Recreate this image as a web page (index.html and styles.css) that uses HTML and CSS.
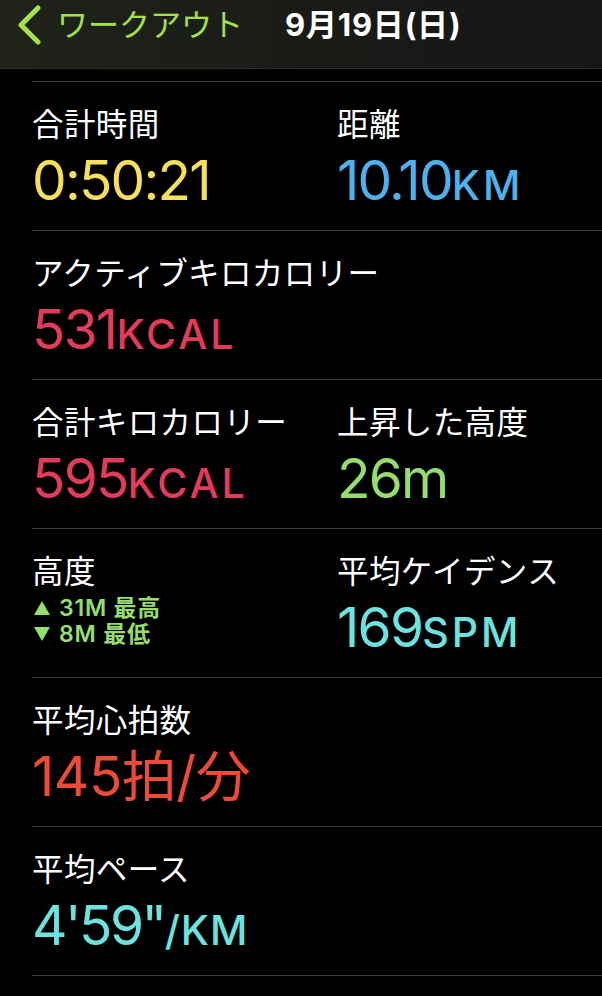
FILE: index.html
```html
<!DOCTYPE html>
<html lang="ja">
<head>
  <meta charset="UTF-8">
  <meta name="viewport" content="width=device-width, initial-scale=1.0">
  <title>ワークアウト</title>
  <link rel="stylesheet" href="styles.css">
</head>
<body>
  <div id="nav">
    <div class="back">
      <svg class="chevron" width="26" height="40" viewBox="0 0 26 40">
        <path d="M22 3 L5 20 L22 37" fill="none" stroke="#a6e04c" stroke-width="5" stroke-linecap="round" stroke-linejoin="round"/>
      </svg>
      <span>ワークアウト</span>
    </div>
    <div class="title">9月19日(日)</div>
  </div>

  <div id="stats">
    <div class="row">
      <div class="cell">
        <div class="label">合計時間</div>
        <div class="value yellow">0:50:21</div>
      </div>
      <div class="cell">
        <div class="label">距離</div>
        <div class="value blue">10.10<span class="unit">KM</span></div>
      </div>
    </div>

    <div class="row">
      <div class="cell wide">
        <div class="label">アクティブキロカロリー</div>
        <div class="value pink">531<span class="unit">KCAL</span></div>
      </div>
    </div>

    <div class="row">
      <div class="cell">
        <div class="label">合計キロカロリー</div>
        <div class="value pink">595<span class="unit">KCAL</span></div>
      </div>
      <div class="cell">
        <div class="label">上昇した高度</div>
        <div class="value green">26m</div>
      </div>
    </div>

    <div class="row">
      <div class="cell">
        <div class="label">高度</div>
        <div class="minmax green">
          <div class="line">
            <svg class="tri" width="16" height="14" viewBox="0 0 16 14"><path d="M8 0 L16 14 L0 14 Z" fill="#96dd6f"/></svg>
            <span>31M 最高</span>
          </div>
          <div class="line">
            <svg class="tri" width="16" height="14" viewBox="0 0 16 14"><path d="M0 0 L16 0 L8 14 Z" fill="#96dd6f"/></svg>
            <span>8M 最低</span>
          </div>
        </div>
      </div>
      <div class="cell">
        <div class="label">平均ケイデンス</div>
        <div class="value cyan">169<span class="unit">SPM</span></div>
      </div>
    </div>

    <div class="row">
      <div class="cell wide">
        <div class="label">平均心拍数</div>
        <div class="value orange heart">145拍/分</div>
      </div>
    </div>

    <div class="row">
      <div class="cell wide">
        <div class="label">平均ペース</div>
        <div class="value cyan pace">4'59"<span class="unit">/KM</span></div>
      </div>
    </div>
  </div>
</body>
</html>
```

FILE: styles.css
```css
body {
  margin: 0;
  background: #000;
  color: #fff;
  font-family: Inter, "Noto Sans CJK JP", sans-serif;
}
#nav {
  height: 62px;
  padding: 6px 0 0 16px;
  display: flex;
  align-items: flex-start;
  background: linear-gradient(90deg, #1f2319 0%, #1a1b17 50%, #161616 100%);
  border-bottom: 1px solid #2e2e2e;
}
.back {
  display: flex;
  align-items: center;
  color: #a6e04c;
  font-size: 31px;
  line-height: 38px;
  height: 38px;
}
.chevron {
  margin-right: 15px;
}
.title {
  margin-left: 42px;
  font-size: 31px;
  line-height: 38px;
  height: 38px;
  font-weight: 700;
  letter-spacing: 0.8px;
}
#stats {
  margin: 12px 0 0 32px;
  border-top: 1px solid #3a3a3c;
}
.row {
  display: grid;
  grid-template-columns: 305px 1fr;
  height: 104px;
  padding: 25px 0 19px 0;
  border-bottom: 1px solid #3a3a3c;
}
.wide {
  grid-column: 1 / 3;
}
.label {
  font-size: 31.5px;
  line-height: 36px;
  height: 36px;
  letter-spacing: 0.4px;
}
.value {
  margin-top: 7px;
  font-size: 55px;
  line-height: 60px;
  height: 60px;
  letter-spacing: -1.8px;
}
.unit {
  font-size: 41px;
  font-weight: 500;
  letter-spacing: 3px;
}
.heart {
  letter-spacing: -0.5px;
}
.pace {
  letter-spacing: -2.5px;
}
.pace .unit {
  letter-spacing: 1px;
}
.minmax {
  margin-top: 5px;
  font-size: 23px;
  line-height: 26px;
  font-weight: 600;
  letter-spacing: 0.8px;
}
.line {
  display: flex;
  align-items: center;
  height: 26px;
}
.tri {
  margin: 0 9px 0 2px;
}
.yellow { color: #f6df5a; }
.blue { color: #4fb0ee; }
.pink { color: #e33b5a; }
.green { color: #96dd6f; }
.cyan { color: #6ee2df; }
.orange { color: #ec4b35; }
```
